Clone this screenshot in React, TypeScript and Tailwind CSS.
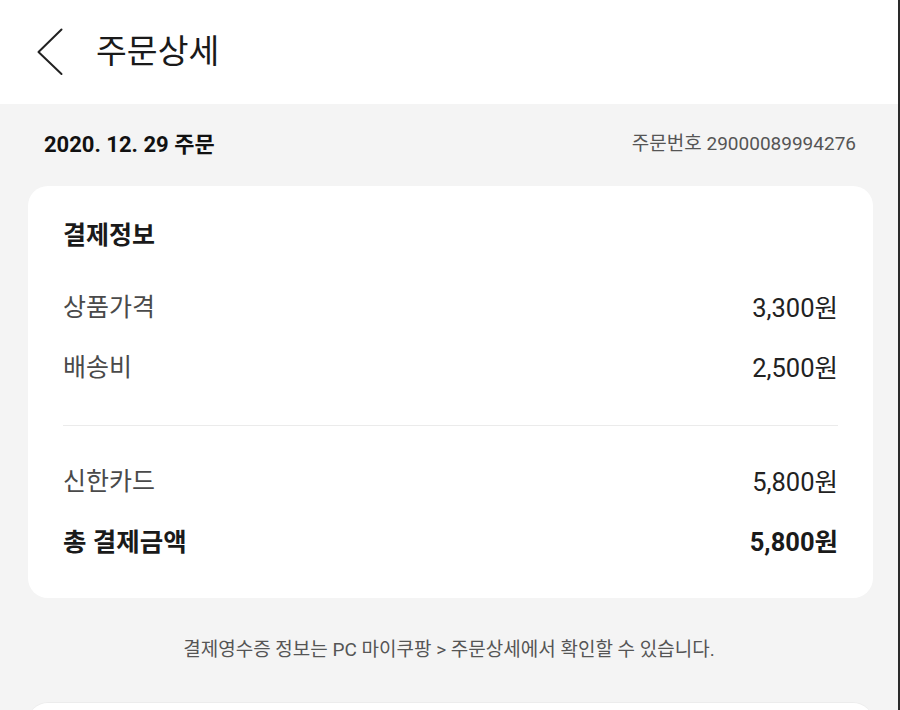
import React from 'react';

const font = { fontFamily: 'Roboto, "Noto Sans CJK KR", sans-serif' };

const Row = ({ label, value, bold }: { label: string; value: string; bold?: boolean }) => (
  <div className="flex h-[60px] items-center justify-between">
    <span className={bold ? 'text-[25.5px] font-bold text-[#1a1a1a]' : 'text-[25px] text-[#4a4a4a]'}>{label}</span>
    <span className={bold ? 'text-[25.5px] font-bold text-[#1a1a1a]' : 'text-[25.5px] text-[#222]'}>{value}</span>
  </div>
);

const App = () => {
  return (
    <div className="flex h-[710px] w-[900px] overflow-hidden bg-[#f4f4f4]" style={font}>
      <div className="flex w-[898px] flex-col">
        {/* header */}
        <header className="flex h-[104px] shrink-0 items-center bg-white">
          <svg className="ml-[36px] h-[48px] w-[30px]" viewBox="0 0 30 48" fill="none">
            <path d="M25.5 4.5 L2.5 27 L25.5 49" transform="translate(0 -3)" stroke="#222" strokeWidth="2" strokeLinecap="round" strokeLinejoin="round" />
          </svg>
          <h1 className="ml-[30px] text-[33.5px] font-normal leading-none text-[#1a1a1a]">주문상세</h1>
        </header>

        {/* order info */}
        <div className="flex h-[80px] shrink-0 items-center justify-between pl-[44px] pr-[42px]">
          <span className="text-[22px] font-bold text-[#111]">2020. 12. 29 주문</span>
          <span className="text-[19px] text-[#555]">주문번호 29000089994276</span>
        </div>

        {/* payment card */}
        <section className="mt-[2px] ml-[28px] mr-[25px] shrink-0 rounded-[20px] bg-white px-[35px] pt-[34px] pb-[26px]">
          <h2 className="text-[25px] leading-[32px] font-bold text-[#1a1a1a]">결제정보</h2>
          <div className="mt-[26px]">
            <Row label="상품가격" value="3,300원" />
            <Row label="배송비" value="2,500원" />
          </div>
          <div className="mt-[27px] h-px bg-[#ebebeb]" />
          <div className="mt-[26px]">
            <Row label="신한카드" value="5,800원" />
            <Row label="총 결제금액" value="5,800원" bold />
          </div>
        </section>

        <p className="mt-[38px] shrink-0 text-center text-[19px] leading-[28px] text-[#555]">
          결제영수증 정보는 PC 마이쿠팡 &gt; 주문상세에서 확인할 수 있습니다.
        </p>

        <div className="mt-[38px] ml-[28px] mr-[25px] h-[40px] shrink-0 rounded-t-[20px] border-t border-[#ececec] bg-white" />
      </div>
      <div className="w-[2px] shrink-0 bg-[#2a2a2a]" />
    </div>
  );
};

export default App;
